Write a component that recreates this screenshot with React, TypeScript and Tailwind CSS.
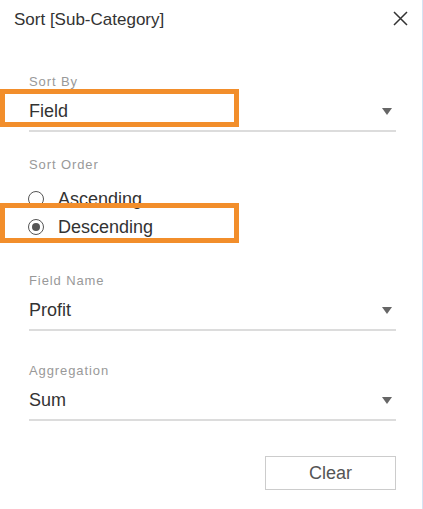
import React from 'react';

const Caret = () => (
  <span className="mr-[4px] w-0 h-0 shrink-0 border-l-[5px] border-r-[5px] border-t-[7px] border-l-transparent border-r-transparent border-t-[#666666]" />
);

const SelectField = ({ label, value, className }: { label: string; value: string; className?: string }) => (
  <div className={className}>
    <div className="text-[13px] leading-[16px] tracking-[0.9px] text-[#999999]">{label}</div>
    <div className="mt-[10px] flex items-center justify-between pb-[8px] border-b-2 border-[#dcdcdc]">
      <span className="text-[18px] leading-[22px] text-[#333333]">{value}</span>
      <Caret />
    </div>
  </div>
);

const Radio = ({ label, checked, className }: { label: string; checked?: boolean; className?: string }) => (
  <div className={`flex items-center ${className ?? ''}`}>
    <span className="ml-[-1px] shrink-0 flex items-center justify-center w-[16px] h-[16px] rounded-full border-[1.5px] border-[#555555]">
      {checked && <span className="w-[8px] h-[8px] rounded-full bg-[#555555]" />}
    </span>
    <span className="ml-[14px] text-[18px] leading-[22px] text-[#333333]">{label}</span>
  </div>
);

export default function App() {
  return (
    <div className="relative w-[423px] h-[509px] bg-white border-r border-[#d5e3f3] font-['Liberation_Sans',Arial,sans-serif]">
      <div className="flex items-start justify-between pt-[10px] pl-[14px] pr-[14px]">
        <h1 className="text-[17px] leading-[20px] text-[#333333]">Sort [Sub-Category]</h1>
        <svg className="mt-[1px] shrink-0" width="15" height="15" viewBox="0 0 15 15" fill="none" stroke="#333333" strokeWidth="1.5">
          <path d="M1 1 L14 14 M14 1 L1 14" />
        </svg>
      </div>

      <div className="pl-[29px] pr-[26px]">
        <SelectField className="mt-[44px]" label="Sort By" value="Field" />

        <div className="mt-[25px]">
          <div className="text-[13px] leading-[16px] tracking-[0.9px] text-[#999999]">Sort Order</div>
          <Radio className="mt-[15px]" label="Ascending" />
          <Radio className="mt-[6px]" label="Descending" checked />
        </div>

        <SelectField className="mt-[35px]" label="Field Name" value="Profit" />
        <SelectField className="mt-[32px]" label="Aggregation" value="Sum" />

        <div className="mt-[35px] flex justify-end">
          <button className="w-[131px] h-[34px] border border-[#cccccc] bg-white text-[18px] text-[#555555]">Clear</button>
        </div>
      </div>

      {/* highlight annotations */}
      <div className="absolute left-0 top-[89px] w-[239px] h-[38px] border-[5px] border-[#f28e2b]" />
      <div className="absolute left-0 top-[203px] w-[239px] h-[40px] border-[5px] border-[#f28e2b]" />
    </div>
  );
}
